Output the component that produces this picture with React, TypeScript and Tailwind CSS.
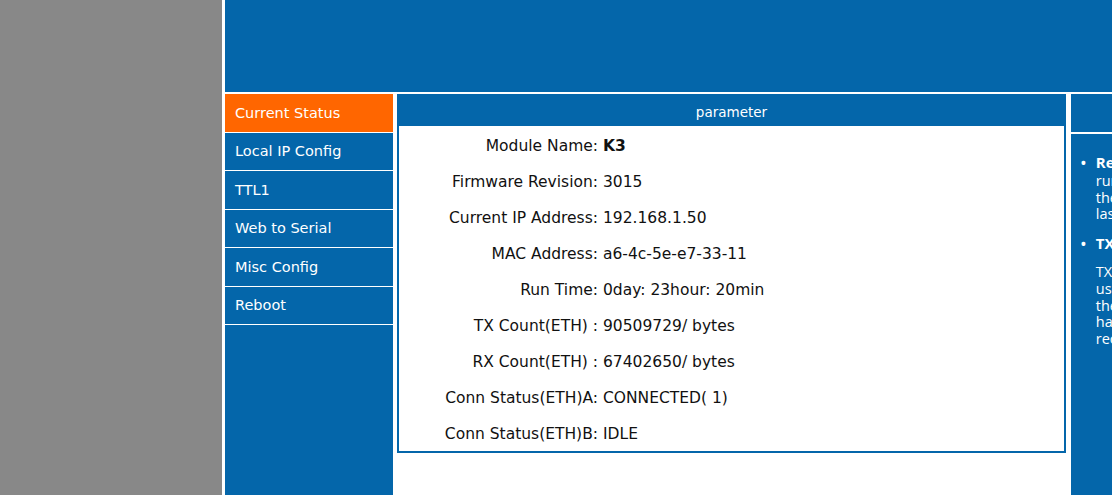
import React from "react";

const menu = ["Current Status", "Local IP Config", "TTL1", "Web to Serial", "Misc Config", "Reboot"];

const rows: { label: string; value: string; bold?: boolean }[] = [
    { label: "Module Name:", value: "K3", bold: true },
    { label: "Firmware Revision:", value: "3015" },
    { label: "Current IP Address:", value: "192.168.1.50" },
    { label: "MAC Address:", value: "a6-4c-5e-e7-33-11" },
    { label: "Run Time:", value: "0day: 23hour: 20min" },
    { label: "TX Count(ETH) :", value: "90509729/ bytes" },
    { label: "RX Count(ETH) :", value: "67402650/ bytes" },
    { label: "Conn Status(ETH)A:", value: "CONNECTED( 1)" },
    { label: "Conn Status(ETH)B:", value: "IDLE" },
];

const App = () => {
    return (
        <div className="flex h-[495px] w-[1112px] overflow-hidden bg-white font-['DejaVu_Sans',sans-serif]">
            <div className="h-full w-[222px] shrink-0 bg-[#888888]" />
            <div className="flex min-w-0 flex-1 flex-col pl-[3px]">
                <div className="h-[92px] shrink-0 bg-[#0466aa]" />
                <div className="mt-[2px] flex min-h-0 flex-1">
                    {/* side menu */}
                    <div className="w-[168px] shrink-0 bg-[#0466aa]">
                        {menu.map((item, i) => (
                            <div
                                key={item}
                                className={`flex h-[38.5px] items-center border-b border-white pl-[10px] pt-[2px] text-[14.5px] text-white ${
                                    i === 0 ? "bg-[#ff6600]" : "bg-[#0466aa]"
                                }`}
                            >
                                {item}
                            </div>
                        ))}
                    </div>

                    {/* parameter panel */}
                    <div className="ml-[4px] w-[669px] shrink-0 self-start border-2 border-[#0466aa]">
                        <div className="flex h-[30px] items-center justify-center bg-[#0466aa] pt-[3px] text-[13.5px] text-white">
                            parameter
                        </div>
                        <div className="pt-[1px] text-[15.5px] text-[#111]">
                            {rows.map((r) => (
                                <div key={r.label} className="flex h-[36px] items-center pt-[3px]">
                                    <div className="w-[199px] shrink-0 text-right">{r.label}</div>
                                    <div className={`pl-[5px] ${r.bold ? "font-bold" : ""}`}>{r.value}</div>
                                </div>
                            ))}
                        </div>
                    </div>

                    {/* help panel */}
                    <div className="ml-[5px] flex w-[260px] shrink-0 flex-col bg-[#0466aa] font-['Open_Sans',sans-serif] text-[14.5px] text-white">
                        <div className="h-[38px] shrink-0" />
                        <div className="h-[2px] shrink-0 bg-white" />
                        <ul className="pl-[9px] pt-[20px]">
                            <li className="flex gap-[9px]">
                                <span className="text-[18px] leading-[18px]">•</span>
                                <div className="leading-[16.8px]">
                                    <div className="mb-[2px] text-[15px] font-bold">Real Time</div>
                                    <div>running time since</div>
                                    <div>the module was</div>
                                    <div>last powered on</div>
                                </div>
                            </li>
                            <li className="mt-[12px] flex gap-[9px]">
                                <span className="text-[18px] leading-[18px]">•</span>
                                <div className="leading-[16.8px]">
                                    <div className="text-[15px] font-bold">TX Count</div>
                                    <div className="mt-[12px]">TX Count(ETH) is</div>
                                    <div>used to count</div>
                                    <div>the bytes that</div>
                                    <div>have been sent and</div>
                                    <div>received</div>
                                </div>
                            </li>
                        </ul>
                    </div>
                </div>
            </div>
        </div>
    );
};

export default App;
